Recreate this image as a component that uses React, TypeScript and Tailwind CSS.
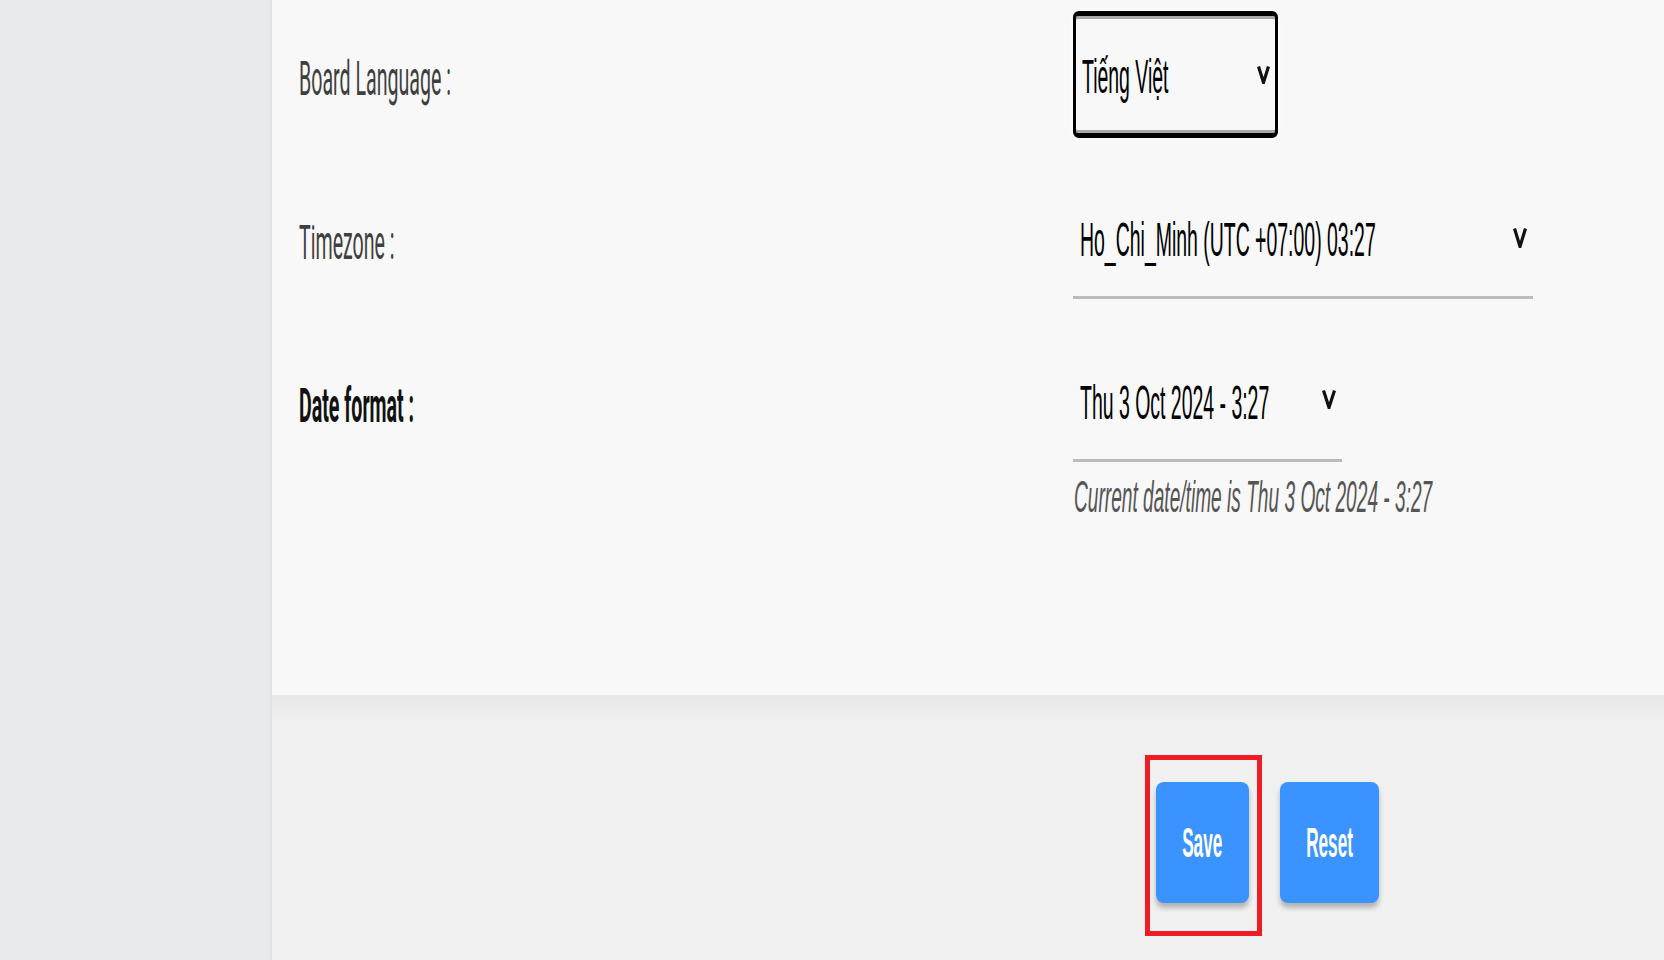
import React from "react";

function Chevron({ w, h }: { w: number; h: number }) {
  return (
    <svg width={w} height={h} viewBox={`0 0 ${w} ${h}`} className="block">
      <path
        d={`M1.5 1.5 L${w / 2} ${h - 1.5} L${w - 1.5} 1.5`}
        fill="none"
        stroke="#111"
        strokeWidth={3.2}
        strokeLinecap="butt"
        strokeLinejoin="miter"
      />
    </svg>
  );
}

const labelBase =
  "inline-block origin-left scale-x-[0.4] whitespace-nowrap text-[49px] leading-[49px] font-['Roboto',sans-serif]";
const valueBase =
  "inline-block origin-left scale-x-[0.397] whitespace-nowrap text-[49px] leading-[49px] text-black font-['Liberation_Sans',Arial,sans-serif]";

export default function App() {
  return (
    <div className="flex h-[960px] w-full overflow-hidden bg-[#f0f0f0]">
      <aside className="w-[272px] shrink-0 bg-[#e9eaec] border-r-2 border-[#e2e3e5]" />
      <main className="flex flex-1 flex-col">
        <section className="h-[695px] bg-[#f8f8f8] pl-[27px]">
          {/* Row 1 */}
          <div className="flex pt-[11px]">
            <div className="w-[774px] shrink-0 pt-[43px]">
              <span className={`${labelBase} text-[#3f3f3f]`}>Board Language :</span>
            </div>
            <div className="flex h-[127px] w-[205px] items-center justify-between rounded-[6px] border-x-[3px] border-y-[5px] border-black bg-[#f8f8f8] pl-[6px] pr-[5px] pt-[4px] shadow-[inset_0_3px_0_#a8a8a8,inset_0_-3px_0_#a8a8a8,0_0_6px_#ffffff]">
              <div className="w-[100px] overflow-visible">
                <span className={valueBase}>Tiếng Việt</span>
              </div>
              <div className="-mt-[4px]">
                <Chevron w={13} h={19} />
              </div>
            </div>
          </div>
          {/* Row 2 */}
          <div className="flex">
            <div className="w-[774px] shrink-0 pt-[80px]">
              <span className={`${labelBase} text-[#3f3f3f]`}>Timezone :</span>
            </div>
            <div className="flex w-[460px] items-start justify-between border-b-[3px] border-[#bbbbbb] pl-[7px] pr-[6px] pt-[77px] pb-[32px]">
              <div className="w-[300px]">
                <span className={valueBase}>Ho_Chi_Minh (UTC +07:00) 03:27</span>
              </div>
              <div className="pt-[12px]">
                <Chevron w={14} h={21} />
              </div>
            </div>
          </div>
          {/* Row 3 */}
          <div className="flex">
            <div className="w-[774px] shrink-0 pt-[82px]">
              <span className={`${labelBase} font-bold text-[#111]`}>Date format :</span>
            </div>
            <div className="flex flex-col">
              <div className="flex w-[269px] items-start justify-between border-b-[3px] border-[#bbbbbb] pl-[7px] pr-[6px] pt-[79px] pb-[32px]">
                <div className="w-[200px]">
                  <span className={valueBase}>Thu 3 Oct 2024 - 3:27</span>
                </div>
                <div className="pt-[11px]">
                  <Chevron w={14} h={20} />
                </div>
              </div>
              <div className="mt-[12px] pl-[1px]">
                <span className="inline-block origin-left scale-x-[0.425] whitespace-nowrap text-[45px] leading-[45px] italic text-[#555] font-['Liberation_Sans',Arial,sans-serif]">
                  Current date/time is Thu 3 Oct 2024 - 3:27
                </span>
              </div>
            </div>
          </div>
        </section>
        <footer className="flex flex-1 gap-[31px] bg-[linear-gradient(#e7e7e7,#f0f0f0_28px)] pl-[884px] pt-[87px]">
          <div className="relative">
            <button className="flex h-[121px] w-[93px] items-center justify-center rounded-[8px] bg-[#3a93fe] shadow-[0_5px_5px_rgba(0,0,0,0.25)]">
              <span className="inline-block scale-x-[0.4] whitespace-nowrap text-[43px] leading-[43px] font-bold text-white font-['Liberation_Sans',Arial,sans-serif]">
                Save
              </span>
            </button>
            <div className="pointer-events-none absolute left-[-11px] top-[-27px] h-[181px] w-[117px] border-[5px] border-[#ee1c25]" />
          </div>
          <button className="flex h-[121px] w-[99px] items-center justify-center rounded-[8px] bg-[#3a93fe] shadow-[0_5px_5px_rgba(0,0,0,0.25)]">
            <span className="inline-block scale-x-[0.4] whitespace-nowrap text-[43px] leading-[43px] font-bold text-white font-['Liberation_Sans',Arial,sans-serif]">
              Reset
            </span>
          </button>
        </footer>
      </main>
    </div>
  );
}
